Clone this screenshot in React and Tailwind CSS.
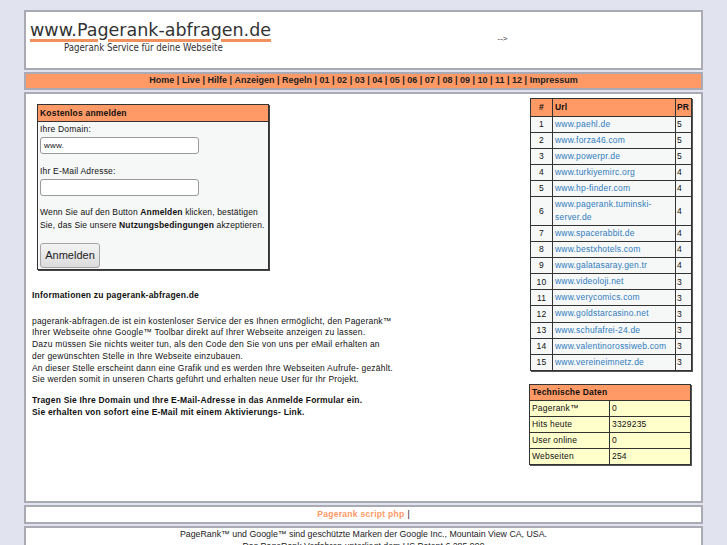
import React from "react";

const sites = [
  ["1", "www.paehl.de", "5"],
  ["2", "www.forza46.com", "5"],
  ["3", "www.powerpr.de", "5"],
  ["4", "www.turkiyemirc.org", "4"],
  ["5", "www.hp-finder.com", "4"],
  ["6", "www.pagerank.tuminski-server.de", "4"],
  ["7", "www.spacerabbit.de", "4"],
  ["8", "www.bestxhotels.com", "4"],
  ["9", "www.galatasaray.gen.tr", "4"],
  ["10", "www.videoloji.net", "3"],
  ["11", "www.verycomics.com", "3"],
  ["12", "www.goldstarcasino.net", "3"],
  ["13", "www.schufafrei-24.de", "3"],
  ["14", "www.valentinorossiweb.com", "3"],
  ["15", "www.vereineimnetz.de", "3"],
];

const stats = [
  ["Pagerank™", "0"],
  ["Hits heute", "3329235"],
  ["User online", "0"],
  ["Webseiten", "254"],
];

const nav = ["Home", "Live", "Hilfe", "Anzeigen", "Regeln", "01", "02", "03", "04", "05", "06", "07", "08", "09", "10", "11", "12", "Impressum"];

export default function App() {
  return (
    <div className="min-h-[545px] bg-[#e1e3ef] px-6 pt-[10px] font-['Liberation_Sans',Arial,sans-serif] text-[#111]">
      {/* header */}
      <div className="flex h-[60px] items-center border-2 border-[#a9aab4] bg-white">
        <div className="w-[266px] pb-[6px] pl-1">
          <div className="font-['DejaVu_Sans',sans-serif] text-[17.5px] leading-[20px] text-[#333] underline decoration-[#f29160] decoration-[3px] underline-offset-[3px]">
            www.Pagerank-abfragen.de
          </div>
          <div className="mt-[2px] pl-[34px] font-['DejaVu_Sans_Condensed','DejaVu_Sans',sans-serif] text-[9.6px] leading-[12px] text-[#333]">
            Pagerank Service für deine Webseite
          </div>
        </div>
        <div className="flex-1 pb-[2px] pl-[12px] text-center text-[8px] text-[#333]">--&gt;</div>
      </div>

      {/* nav */}
      <div className="mt-[2px] flex h-[18px] items-center justify-center border-2 border-[#a9aab4] bg-[#ff9966] text-[9px] font-bold text-[#222]">
        {nav.map((n, i) => (
          <span key={n}>
            {i > 0 && <span>&nbsp;|&nbsp;</span>}
            {n}
          </span>
        ))}
      </div>

      {/* main */}
      <div className="mt-[2px] flex h-[411px] border-2 border-[#a9aab4] bg-white tracking-[0.2px]">
        <div className="flex-1 pl-[6px] pt-[10px]">
          <div className="ml-[5px] w-[232px] border border-[#333] bg-[#f6f7f7] shadow-[1px_1px_0_#444]">
            <div className="h-[17px] border-b border-[#333] bg-[#ff9966] pl-[2px] text-[8.5px] font-bold leading-[17px]">
              Kostenlos anmelden
            </div>
            <div className="px-[2px] pb-[1px] text-[8.5px]">
              <div className="mt-[1px] leading-[12px]">Ihre Domain:</div>
              <div className="mt-[2px] flex h-[17px] w-[159px] items-center rounded-[3px] border border-[#9a9a9a] bg-white pl-[3px] text-[8px]">
                www.
              </div>
              <div className="mt-[11px] leading-[12px]">Ihr E-Mail Adresse:</div>
              <div className="mt-[2px] h-[17px] w-[159px] rounded-[3px] border border-[#9a9a9a] bg-white" />
              <div className="mt-[10px] whitespace-nowrap leading-[13px] tracking-[0.15px]">
                Wenn Sie auf den Button <b>Anmelden</b> klicken, bestätigen
                <br />
                Sie, das Sie unsere <b>Nutzungsbedingungen</b> akzeptieren.
              </div>
              <button className="mt-[11px] block h-[25px] w-[60px] rounded-[3px] border border-[#a5a5a5] bg-gradient-to-b from-[#f4f4f4] to-[#dcdcdc] text-[11px] tracking-normal text-[#222]">
                Anmelden
              </button>
            </div>
          </div>

          <div className="mt-[20px] text-[8.5px] leading-[11.7px]">
            <div className="font-bold">Informationen zu pagerank-abfragen.de</div>
            <div className="mt-[14px]">
              pagerank-abfragen.de ist ein kostenloser Service der es Ihnen ermöglicht, den Pagerank™
              <br />
              Ihrer Webseite ohne Google™ Toolbar direkt auf Ihrer Webseite anzeigen zu lassen.
              <br />
              Dazu müssen Sie nichts weiter tun, als den Code den Sie von uns per eMail erhalten an
              <br />
              der gewünschten Stelle in Ihre Webseite einzubauen.
              <br />
              An dieser Stelle erscheint dann eine Grafik und es werden Ihre Webseiten Aufrufe- gezählt.
              <br />
              Sie werden somit in unseren Charts geführt und erhalten neue User für Ihr Projekt.
            </div>
            <div className="mt-[8px] font-bold leading-[12.5px]">
              Tragen Sie Ihre Domain und Ihre E-Mail-Adresse in das Anmelde Formular ein.
              <br />
              Sie erhalten von sofort eine E-Mail mit einem Aktivierungs- Link.
            </div>
          </div>
        </div>

        <div className="w-[171px] pt-[4px]">
          <table className="w-[162px] border-collapse border border-[#333] text-[8.5px] shadow-[1px_1px_0_#555]">
            <thead>
              <tr className="h-[18px] bg-[#ff9966] font-bold">
                <td className="w-[22px] border border-[#333] text-center">#</td>
                <td className="border border-[#333] pl-[2px]">Url</td>
                <td className="w-[16px] border border-[#333] pl-[1px]">PR</td>
              </tr>
            </thead>
            <tbody>
              {sites.map(([n, url, pr]) => (
                <tr key={n} className={n === "6" ? "h-[29px] bg-[#f6f7f7]" : "h-[16.05px] bg-[#f6f7f7]"}>
                  <td className="border border-[#333] text-center">{n}</td>
                  <td className="border border-[#333] pl-[2px] leading-[13px] text-[#2f7cbd]">
                    {n === "6" ? (
                      <>
                        www.pagerank.tuminski-
                        <br />
                        server.de
                      </>
                    ) : (
                      url
                    )}
                  </td>
                  <td className="border border-[#333] pl-[1px]">{pr}</td>
                </tr>
              ))}
            </tbody>
          </table>

          <table className="-ml-px mt-[13px] w-[162px] border-collapse border border-[#333] text-[8.5px] shadow-[1px_1px_0_#555]">
            <tbody>
              <tr className="h-[16px] bg-[#ff9966] font-bold">
                <td colSpan={2} className="border border-[#333] pl-[2px]">
                  Technische Daten
                </td>
              </tr>
              {stats.map(([k, v]) => (
                <tr key={k} className="h-[16px] bg-[#ffffcc]">
                  <td className="w-[80px] border border-[#333] pl-[2px]">{k}</td>
                  <td className="border border-[#333] pl-[2px]">{v}</td>
                </tr>
              ))}
            </tbody>
          </table>
        </div>
      </div>

      {/* footer link */}
      <div className="mt-[2px] flex h-[19px] items-center justify-center border-2 border-[#a9aab4] bg-white text-[8.5px]">
        <span className="font-bold tracking-[0.3px] text-[#ff9966]">Pagerank script php</span>
        <span className="ml-[3px]">|</span>
      </div>

      <div className="mt-[2px] border-2 border-b-0 border-[#a9aab4] bg-white text-center text-[8.8px] leading-[12px] text-[#222]">
        PageRank™ und Google™ sind geschützte Marken der Google Inc., Mountain View CA, USA.
        <br />
        Das PageRank Verfahren unterliegt dem US Patent 6,285,999
      </div>
    </div>
  );
}
